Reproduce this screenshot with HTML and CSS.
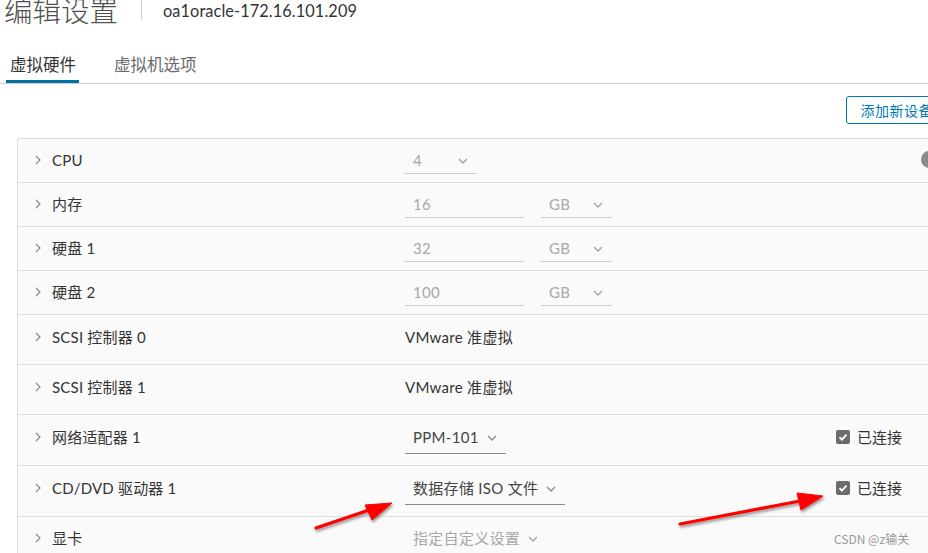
FILE: index.html
```html
<!DOCTYPE html>
<html lang="zh">
<head>
<meta charset="utf-8">
<title>编辑设置</title>
<link rel="stylesheet" href="styles.css">
</head>
<body>
<div class="page">
  <header class="head">
    <h1 class="title">编辑设置</h1>
    <span class="sep"></span>
    <span class="vm">oa1oracle-172.16.101.209</span>
  </header>

  <nav class="tabs">
    <a class="tab active">虚拟硬件</a>
    <a class="tab">虚拟机选项</a>
  </nav>

  <div class="toolbar">
    <button class="btn">添加新设备</button>
  </div>

  <div class="grid">
    <div class="row">
      <div class="label"><svg class="chev" viewBox="0 0 6 10"><path d="M1 1l4 4-4 4"/></svg>CPU</div>
      <div class="value">
        <span class="ctl dis w72">4<svg class="dd" viewBox="0 0 10 6"><path d="M1 1l4 4 4-4"/></svg></span>
      </div>
      <div class="extra end"><span class="info">i</span></div>
    </div>

    <div class="row">
      <div class="label"><svg class="chev" viewBox="0 0 6 10"><path d="M1 1l4 4-4 4"/></svg>内存</div>
      <div class="value">
        <span class="ctl dis w119">16</span>
        <span class="ctl dis w71">GB<svg class="dd" viewBox="0 0 10 6"><path d="M1 1l4 4 4-4"/></svg></span>
      </div>
      <div class="extra"></div>
    </div>

    <div class="row">
      <div class="label"><svg class="chev" viewBox="0 0 6 10"><path d="M1 1l4 4-4 4"/></svg>硬盘 1</div>
      <div class="value">
        <span class="ctl dis w119">32</span>
        <span class="ctl dis w71">GB<svg class="dd" viewBox="0 0 10 6"><path d="M1 1l4 4 4-4"/></svg></span>
      </div>
      <div class="extra"></div>
    </div>

    <div class="row">
      <div class="label"><svg class="chev" viewBox="0 0 6 10"><path d="M1 1l4 4-4 4"/></svg>硬盘 2</div>
      <div class="value">
        <span class="ctl dis w119">100</span>
        <span class="ctl dis w71">GB<svg class="dd" viewBox="0 0 10 6"><path d="M1 1l4 4 4-4"/></svg></span>
      </div>
      <div class="extra"></div>
    </div>

    <div class="row row-text">
      <div class="label"><svg class="chev" viewBox="0 0 6 10"><path d="M1 1l4 4-4 4"/></svg>SCSI 控制器 0</div>
      <div class="value"><span class="plain">VMware 准虚拟</span></div>
      <div class="extra"></div>
    </div>

    <div class="row row-text">
      <div class="label"><svg class="chev" viewBox="0 0 6 10"><path d="M1 1l4 4-4 4"/></svg>SCSI 控制器 1</div>
      <div class="value"><span class="plain">VMware 准虚拟</span></div>
      <div class="extra"></div>
    </div>

    <div class="row row-dev">
      <div class="label"><svg class="chev" viewBox="0 0 6 10"><path d="M1 1l4 4-4 4"/></svg>网络适配器 1</div>
      <div class="value">
        <span class="ctl on tall">PPM-101<svg class="dd" viewBox="0 0 10 6"><path d="M1 1l4 4 4-4"/></svg></span>
      </div>
      <div class="extra"><span class="cb"><svg viewBox="0 0 14 14"><path d="M3.5 7.2l2.4 2.4 4.6-5"/></svg></span>已连接</div>
    </div>

    <div class="row row-dev">
      <div class="label"><svg class="chev" viewBox="0 0 6 10"><path d="M1 1l4 4-4 4"/></svg>CD/DVD 驱动器 1</div>
      <div class="value">
        <span class="ctl on tall">数据存储 ISO 文件<svg class="dd" viewBox="0 0 10 6"><path d="M1 1l4 4 4-4"/></svg></span>
      </div>
      <div class="extra"><span class="cb"><svg viewBox="0 0 14 14"><path d="M3.5 7.2l2.4 2.4 4.6-5"/></svg></span>已连接</div>
    </div>

    <div class="row">
      <div class="label"><svg class="chev" viewBox="0 0 6 10"><path d="M1 1l4 4-4 4"/></svg>显卡</div>
      <div class="value">
        <span class="ctl dis tall">指定自定义设置<svg class="dd" viewBox="0 0 10 6"><path d="M1 1l4 4 4-4"/></svg></span>
      </div>
      <div class="extra"></div>
    </div>
  </div>
</div>

<svg class="arrows" viewBox="0 0 928 553" width="928" height="553">
  <defs>
    <filter id="sh" x="-20%" y="-50%" width="140%" height="200%">
      <feDropShadow dx="1" dy="2" stdDeviation="1.5" flood-color="#000" flood-opacity="0.45"/>
    </filter>
  </defs>
  <g filter="url(#sh)" fill="#ff0000" stroke="#ff0000">
    <line x1="316" y1="528" x2="372" y2="509" stroke-width="3.2" stroke-linecap="round"/>
    <polygon points="392,503 365,505 372,520" stroke-width="1" stroke-linejoin="round"/>
    <line x1="680" y1="524" x2="800" y2="501" stroke-width="3.2" stroke-linecap="round"/>
    <polygon points="823,496 797,493 801,510" stroke-width="1" stroke-linejoin="round"/>
  </g>
</svg>
<div class="watermark">CSDN @z输关</div>
</body>
</html>
```

FILE: styles.css
```css
html, body {
  margin: 0;
  padding: 0;
  background: #fff;
  overflow: hidden;
  width: 928px;
  height: 553px;
}
body {
  position: relative;
  font-family: Lato, "Noto Sans CJK SC", sans-serif;
  color: #333;
  font-size: 15px;
}
.page {
  width: 948px;
}
.head {
  display: flex;
  align-items: center;
  height: 30px;
  margin-top: -5px;
}
.title {
  margin: 0 0 0 4px;
  font-family: "Noto Sans CJK SC", sans-serif;
  font-weight: 300;
  font-size: 28.5px;
  line-height: 30px;
  color: #505050;
}
.sep {
  width: 1px;
  height: 24px;
  background: #ccc;
  margin: 0 0 0 23px;
  align-self: flex-start;
}
.vm {
  margin-left: 21px;
  font-size: 16.3px;
  color: #333;
  letter-spacing: 0.1px;
  padding-top: 1px;
}
.tabs {
  display: flex;
  margin-top: 25px;
  border-bottom: 1px solid #ccc;
  height: 33px;
}
.tab {
  font-family: "Noto Sans CJK SC", sans-serif;
  font-size: 16.5px;
  line-height: 22px;
  padding: 3px 3px 0 4px;
  margin-left: 6px;
  margin-right: 25px;
  color: #6a6a6a;
  height: 27px;
  box-sizing: content-box;
}
.tab.active {
  color: #333;
  border-bottom: 3px solid #0072a3;
}
.toolbar {
  display: flex;
  justify-content: flex-end;
  padding: 12px 0 14px;
}
.btn {
  font-family: "Noto Sans CJK SC", sans-serif;
  font-size: 14px;
  color: #0079b8;
  background: #fff;
  border: 1px solid #0079b8;
  border-radius: 3px;
  height: 28px;
  padding: 0 14px;
  line-height: 26px;
  letter-spacing: 0.5px;
}
.grid {
  margin-left: 17px;
  border: 1px solid #ddd;
  border-right: none;
  background: #fafafa;
  border-radius: 3px 0 0 0;
}
.row {
  display: grid;
  grid-template-columns: 387px 431px 1fr;
  align-items: start;
  height: 44px;
  box-sizing: border-box;
  padding-top: 10px;
  border-bottom: 1px solid #dedede;
}
.row-text {
  height: 50px;
  padding-top: 11px;
}
.row-dev {
  height: 51px;
  padding-top: 11px;
}
.label {
  display: flex;
  align-items: center;
  line-height: 22px;
  padding-left: 17px;
  color: #333;
  letter-spacing: 0.2px;
}
.chev {
  width: 6px;
  height: 10px;
  margin-right: 11px;
  fill: none;
  stroke: #888;
  stroke-width: 1.2;
}
.value {
  display: flex;
  gap: 17px;
}
.plain {
  line-height: 22px;
  color: #333;
  letter-spacing: 0.3px;
}
.ctl {
  display: flex;
  box-sizing: border-box;
  height: 25px;
  padding: 0 9px 1px 8px;
  line-height: 22px;
  align-items: flex-start;
  border-bottom: 1px solid #c8c8c8;
  letter-spacing: 0.3px;
}
.ctl.tall {
  height: 28px;
  padding-top: 0;
}
.ctl.dis {
  color: #a8a8a8;
  border-bottom-color: #cfcfcf;
}
.ctl.on {
  color: #444;
  border-bottom-color: #8c8c8c;
}
.w72 { width: 72px; }
.w119 { width: 119px; }
.w71 { width: 71px; }
.w72, .w71 { justify-content: space-between; }
.dd {
  width: 10px;
  height: 6px;
  margin: 9px 0 0 8px;
  fill: none;
  stroke: #8a8a8a;
  stroke-width: 1.3;
}
.dis .dd { stroke: #a0a0a0; }
.extra {
  display: flex;
  align-items: center;
  line-height: 22px;
  font-family: "Noto Sans CJK SC", sans-serif;
  color: #333;
}
.extra.end {
  justify-content: flex-end;
  padding-right: 10px;
}
.cb {
  width: 14px;
  height: 14px;
  background: #6b6b6b;
  border-radius: 2px;
  margin-right: 7px;
  display: inline-flex;
}
.cb svg {
  width: 14px;
  height: 14px;
  fill: none;
  stroke: #fff;
  stroke-width: 1.8;
}
.info {
  width: 17px;
  height: 17px;
  border-radius: 50%;
  background: #8a8a8a;
  color: #fff;
  font-size: 11px;
  font-weight: bold;
  line-height: 17px;
  text-align: center;
  margin-top: 2px;
}
.arrows {
  position: absolute;
  left: 0;
  top: 0;
  pointer-events: none;
}
.watermark {
  position: absolute;
  left: 834px;
  top: 530px;
  font-family: "Noto Sans CJK SC", sans-serif;
  font-size: 12px;
  color: #999;
}
```
